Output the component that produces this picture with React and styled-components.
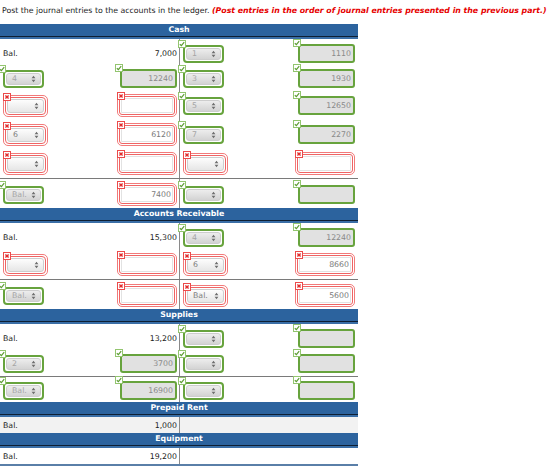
import React from "react";
import styled, { createGlobalStyle, css } from "styled-components";

const Global = createGlobalStyle`
  html, body { margin: 0; padding: 0; background: #fff; }
  body {
    font-family: "DejaVu Sans", Verdana, sans-serif;
    font-size: 7.8px;
    color: #222;
  }
`;

const Page = styled.div`
  padding-top: 6px;
  width: 560px;
`;

const Prompt = styled.p`
  margin: 0 0 0 2px;
  line-height: 10px;
  white-space: nowrap;
`;

const Note = styled.em`
  color: #e60000;
  font-weight: bold;
`;

const Ledger = styled.div`
  margin-top: 8px;
  width: 358px;
  border-bottom: 2px solid #5a7fa8;
`;

const AccountTitle = styled.div`
  height: 15px;
  box-sizing: border-box;
  line-height: 12px;
  text-align: center;
  color: #fff;
  font-weight: bold;
  background: linear-gradient(
    to bottom,
    #2c639e 0,
    #2c639e 12px,
    #0e1f33 12px,
    #0e1f33 13px,
    #3a6ea6 13px
  );
`;

const Row = styled.div`
  display: flex;
  ${(p) => p.$total && css`border-top: 1px solid #7a7a7a;`}
  ${(p) => p.$shade && css`background: #f2f2f2;`}
`;

const pads = {
  first: "5px 0 3px",
  mid: "3px 0",
  total: "4px 0 2px",
  plain: "0",
};

const Side = styled.div`
  flex: 0 0 179px;
  box-sizing: border-box;
  display: flex;
  align-items: center;
  justify-content: space-between;
  padding: ${(p) => pads[p.$kind]};
  padding-left: ${(p) => (p.$right ? "3px" : "3px")};
  padding-right: ${(p) => (p.$right ? "3px" : "2px")};
  ${(p) => p.$right && css`border-left: 1px solid #8a8a8a;`}
  ${(p) => p.$kind === "plain" && css`height: 16px;`}
`;

const Text = styled.span`
  color: #222;
  white-space: nowrap;
`;

/* answer widgets */

const Ring = styled.div`
  position: relative;
  flex: none;
  ${(p) =>
    p.$bad &&
    css`
      border: 1px solid #f27a7a;
      padding: 1px;
      border-radius: 5px;
      background: #fff;
    `}
`;

const Badge = styled.span`
  position: absolute;
  z-index: 1;
  width: 8px;
  height: 8px;
  box-sizing: border-box;
  display: flex;
  align-items: center;
  justify-content: center;
  background: #fff;
  border: 1px solid ${(p) => (p.$bad ? "#ec4a4a" : "#93c56f")};
  left: ${(p) => (p.$bad ? "-1px" : "-5px")};
  top: ${(p) => (p.$bad ? "-3px" : "-5px")};
`;

const SelectFrame = styled.div`
  box-sizing: border-box;
  width: 41px;
  height: 18px;
  padding: 1px;
  border-radius: 4px;
  background: #fff;
  border: ${(p) => (p.$bad ? "1px solid #ef6464" : "2px solid #67a33d")};
`;

const Pill = styled.div`
  height: 100%;
  box-sizing: border-box;
  display: flex;
  align-items: center;
  justify-content: space-between;
  padding: 0 4px 0 5px;
  border-radius: 3px;
  border: 1px solid #cdcdcd;
  background: ${(p) =>
    p.$bad
      ? "linear-gradient(#fdfdfd, #e6e6e6)"
      : "linear-gradient(#ededed, #d3d3d3)"};
  color: ${(p) => (p.$bad ? "#7d7d7d" : "#a5a5a5")};
`;

const Amount = styled.input`
  box-sizing: border-box;
  height: 19px;
  margin: 0;
  font: inherit;
  text-align: right;
  outline: none;
  ${(p) =>
    p.$bad
      ? css`
          width: 56px;
          padding: 0 3px;
          border: 1px solid #ef6464;
          border-radius: 3px;
          background: #fff;
          color: #7a7a7a;
          box-shadow: inset 0 0 0 1px #fff, inset 0 0 0 2px #e2e2e2;
        `
      : css`
          width: 57px;
          padding: 0 2px;
          border: 2px solid #67a33d;
          border-radius: 3px;
          background: #e1e1e1;
          color: #8a8a8a;
        `}
`;

const Check = () => (
  <svg width="6" height="6" viewBox="0 0 6 6">
    <path d="M0.8 3.2 L2.4 4.7 L5.2 1.2" fill="none" stroke="#5f9e35" strokeWidth="1.2" />
  </svg>
);

const Cross = () => (
  <svg width="6" height="6" viewBox="0 0 6 6">
    <path d="M1.4 1.4 L4.6 4.6 M4.6 1.4 L1.4 4.6" fill="none" stroke="#e22b2b" strokeWidth="1.4" />
  </svg>
);

const Arrows = () => (
  <svg width="5" height="8" viewBox="0 0 5 8">
    <path d="M0.6 3.2 L2.5 0.8 L4.4 3.2 Z M0.6 4.8 L2.5 7.2 L4.4 4.8 Z" fill="#6e6e6e" />
  </svg>
);

const Mark = ({ bad }) => <Badge $bad={bad}>{bad ? <Cross /> : <Check />}</Badge>;

const Choice = ({ value, ok }) => (
  <Ring $bad={!ok}>
    <Mark bad={!ok} />
    <SelectFrame $bad={!ok}>
      <Pill $bad={!ok}>
        <span>{value}</span>
        <Arrows />
      </Pill>
    </SelectFrame>
  </Ring>
);

const Entry = ({ value, ok }) => (
  <Ring $bad={!ok}>
    <Mark bad={!ok} />
    <Amount $bad={!ok} readOnly value={value} />
  </Ring>
);

const Cell = ({ data, kind, right }) => (
  <Side $kind={kind} $right={right}>
    {data.text ? (
      <>
        <Text>{data.text[0]}</Text>
        <Text>{data.text[1]}</Text>
      </>
    ) : data.sel ? (
      <>
        <Choice value={data.sel[0]} ok={data.sel[1]} />
        <Entry value={data.amt[0]} ok={data.amt[1]} />
      </>
    ) : null}
  </Side>
);

const G = true;
const X = false;
const e = (s, sOk, a, aOk) => ({ sel: [s, sOk], amt: [a, aOk] });
const bal = (v) => ({ text: ["Bal.", v] });
const none = {};

const accounts = [
  {
    title: "Cash",
    rows: [
      { kind: "first", left: bal("7,000"), right: e("1", G, "1110", G) },
      { kind: "mid", left: e("4", G, "12240", G), right: e("3", G, "1930", G) },
      { kind: "mid", left: e("", X, "", X), right: e("5", G, "12650", G) },
      { kind: "mid", left: e("6", X, "6120", X), right: e("7", G, "2270", G) },
      { kind: "mid", left: e("", X, "", X), right: e("", X, "", X) },
      { kind: "total", left: e("Bal.", G, "7400", X), right: e("", G, "", G) },
    ],
  },
  {
    title: "Accounts Receivable",
    rows: [
      { kind: "first", left: bal("15,300"), right: e("4", G, "12240", G) },
      { kind: "mid", left: e("", X, "", X), right: e("6", X, "8660", X) },
      { kind: "total", left: e("Bal.", G, "", X), right: e("Bal.", X, "5600", X) },
    ],
  },
  {
    title: "Supplies",
    rows: [
      { kind: "first", left: bal("13,200"), right: e("", G, "", G) },
      { kind: "mid", left: e("2", G, "3700", G), right: e("", G, "", G) },
      { kind: "total", left: e("Bal.", G, "16900", G), right: e("", G, "", G) },
    ],
  },
  {
    title: "Prepaid Rent",
    rows: [{ kind: "plain", shade: true, left: bal("1,000"), right: none }],
  },
  {
    title: "Equipment",
    rows: [{ kind: "plain", left: bal("19,200"), right: none }],
  },
];

export default function App() {
  return (
    <Page>
      <Global />
      <Prompt>
        Post the journal entries to the accounts in the ledger.{" "}
        <Note>(Post entries in the order of journal entries presented in the previous part.)</Note>
      </Prompt>
      <Ledger>
        {accounts.map((acc) => (
          <React.Fragment key={acc.title}>
            <AccountTitle>{acc.title}</AccountTitle>
            {acc.rows.map((r, i) => (
              <Row key={i} $total={r.kind === "total"} $shade={r.shade}>
                <Cell data={r.left} kind={r.kind} />
                <Cell data={r.right} kind={r.kind} right />
              </Row>
            ))}
          </React.Fragment>
        ))}
      </Ledger>
    </Page>
  );
}
